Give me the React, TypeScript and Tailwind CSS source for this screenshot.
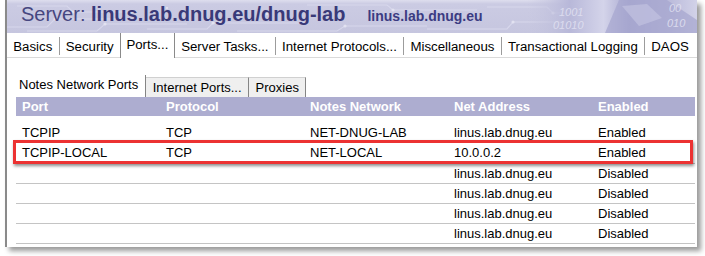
import React from "react";

const tabs = [
  "Basics",
  "Security",
  "Ports...",
  "Server Tasks...",
  "Internet Protocols...",
  "Miscellaneous",
  "Transactional Logging",
  "DAOS",
];
const ACTIVE = 2;

const cols = ["Port", "Protocol", "Notes Network", "Net Address", "Enabled"];
const rows: string[][] = [
  ["TCPIP", "TCP", "NET-DNUG-LAB", "linus.lab.dnug.eu", "Enabled"],
  ["TCPIP-LOCAL", "TCP", "NET-LOCAL", "10.0.0.2", "Enabled"],
  ["", "", "", "linus.lab.dnug.eu", "Disabled"],
  ["", "", "", "linus.lab.dnug.eu", "Disabled"],
  ["", "", "", "linus.lab.dnug.eu", "Disabled"],
  ["", "", "", "linus.lab.dnug.eu", "Disabled"],
];

function HeaderArt() {
  return (
    <svg
      className="absolute inset-0"
      width="690"
      height="33"
      viewBox="0 0 690 33"
      preserveAspectRatio="none"
    >
      <defs>
        <linearGradient id="hg" x1="0" y1="0" x2="0" y2="1">
          <stop offset="0" stopColor="#dedeee" />
          <stop offset="0.12" stopColor="#cbcbe3" />
          <stop offset="1" stopColor="#c6c6df" />
        </linearGradient>
        <linearGradient id="rg" x1="0" y1="0" x2="1" y2="0">
          <stop offset="0" stopColor="#c6c6df" stopOpacity="0" />
          <stop offset="0.25" stopColor="#b8b8d9" />
          <stop offset="0.45" stopColor="#d4d4ea" />
          <stop offset="0.6" stopColor="#a9a9d0" />
          <stop offset="0.85" stopColor="#bdbddc" />
          <stop offset="1" stopColor="#d2d2e8" />
        </linearGradient>
      </defs>
      <rect width="690" height="33" fill="url(#hg)" />
      <g stroke="#d9d9ed" strokeWidth="1.2" fill="none" opacity="0.9">
        <polyline points="0,27 40,27 48,19 110,19" />
        <polyline points="20,31 90,31 98,24 180,24" />
        <polyline points="140,29 200,29 206,23 300,23" />
        <polyline points="230,31 330,31 338,26 420,26" />
        <polyline points="10,6 60,6 66,12 130,12" />
        <polyline points="300,5 380,5 386,10 470,10" />
        <polyline points="420,29 500,29 506,22 560,22" />
        <polyline points="480,7 540,7 546,13 590,13" />
      </g>
      <g fill="#e4e4f2" opacity="0.9">
        <circle cx="48" cy="19" r="1.6" />
        <circle cx="98" cy="24" r="1.6" />
        <circle cx="206" cy="23" r="1.6" />
        <circle cx="338" cy="26" r="1.6" />
        <circle cx="66" cy="12" r="1.6" />
        <circle cx="386" cy="10" r="1.6" />
        <circle cx="506" cy="22" r="1.6" />
        <circle cx="546" cy="13" r="1.6" />
        <circle cx="30" cy="14" r="1.2" />
        <circle cx="160" cy="8" r="1.2" />
        <circle cx="260" cy="14" r="1.2" />
      </g>
      <rect x="520" y="0" width="170" height="33" fill="url(#rg)" />
      <path d="M598 33 L612 0 L660 0 L690 20 L690 33 Z" fill="#a5a5ce" opacity="0.7" />
      <path d="M615 6 L640 4 L655 18 L632 26 Z" fill="#c6c6e2" opacity="0.6" />
      <g
        fill="#e2e2f2"
        fontFamily="'Liberation Sans', Arial, sans-serif"
        fontStyle="italic"
        fontSize="11"
        opacity="0.85"
      >
        <text x="552" y="16">1001</text>
        <text x="546" y="29">01010</text>
        <text x="662" y="12">00</text>
        <text x="660" y="27">010</text>
      </g>
    </svg>
  );
}

export default function App() {
  return (
    <div className="w-[705px] h-[256px] bg-white pl-[5px] font-['Liberation_Sans',Arial,sans-serif] text-black overflow-hidden">
      <div className="relative w-[692px] h-[247px] bg-white border-l-2 border-[#8a8a8a] shadow-[4px_4px_5px_rgba(0,0,0,0.4)] flex flex-col">
        {/* Header */}
        <div className="relative h-[33px] overflow-hidden shrink-0">
          <HeaderArt />
          <div className="relative flex items-baseline pl-[14px] pt-[3px] leading-[23px]">
            <span className="text-[20px] text-[#46467f]">Server:&nbsp;</span>
            <span className="text-[20px] font-bold text-[#393978]">
              linus.lab.dnug.eu/dnug-lab
            </span>
            <span className="ml-[22px] text-[14px] font-bold text-[#3b3b82] leading-[16px]">
              linus.lab.dnug.eu
            </span>
          </div>
        </div>

        {/* Main tabs */}
        <div className="flex h-[25px] shrink-0 text-[13.25px]">
          {tabs.map((t, i) => {
            const els: React.ReactNode[] = [];
            if (i > 0 && i !== ACTIVE && i - 1 !== ACTIVE) {
              els.push(
                <div key={"s" + i} className="h-[25px] border-b border-[#dadada] pt-[4px]">
                  <div className="w-px h-[18px] bg-[#9c9c9c]" />
                </div>
              );
            }
            if (i === ACTIVE) {
              els.push(
                <div
                  key={t}
                  className="h-[25px] border-x border-[#8a8a8a] px-[5.5px] pt-[4px] leading-[16px] whitespace-nowrap"
                >
                  {t}
                </div>
              );
            } else {
              els.push(
                <div
                  key={t}
                  className="h-[25px] border-b border-[#dadada] px-[6.25px] pt-[6px] leading-[16px] whitespace-nowrap"
                >
                  {t}
                </div>
              );
            }
            return els;
          })}
          <div className="flex-1 h-[25px] border-b border-[#dadada]" />
        </div>

        {/* Sub tabs */}
        <div className="flex mt-[17px] ml-[9px] mr-[2px] h-[22px] shrink-0 text-[13px]">
          <div className="h-[22px] pl-[3px] pr-[7px] pt-[2px] leading-[16px] border-r border-[#858585] whitespace-nowrap">
            Notes Network Ports
          </div>
          <div className="mt-[2px] h-[20px] px-[6.5px] pt-[1.5px] leading-[16px] bg-[#efefef] border-t border-r border-t-[#d0d0d0] border-r-[#858585] whitespace-nowrap">
            Internet Ports...
          </div>
          <div className="mt-[2px] h-[20px] px-[6.5px] pt-[1.5px] leading-[16px] bg-[#efefef] border-t border-r border-t-[#d0d0d0] border-r-[#858585] whitespace-nowrap">
            Proxies
          </div>
          <div className="flex-1" />
        </div>

        {/* Table header */}
        <div className="ml-[9px] mr-[2px] h-[19px] shrink-0 bg-[#adadd0] grid grid-cols-[144px_144px_144px_144px_1fr] pl-[6px] text-[13px] font-bold text-white leading-[19px]">
          {cols.map((c) => (
            <div key={c} className="whitespace-nowrap">
              {c}
            </div>
          ))}
        </div>

        {/* Rows */}
        <div className="ml-[9px] mr-[2px] mt-[7px] text-[13px] flex flex-col">
          {rows.map((r, ri) => (
            <div
              key={ri}
              className={
                ri === 0
                  ? "h-[20px] grid grid-cols-[144px_144px_144px_144px_1fr] pl-[6px] leading-[19px]"
                  : ri === 1
                  ? "h-[21px] grid grid-cols-[144px_144px_144px_144px_1fr] pl-[6px] leading-[19px] border-b border-[#c4c4c4]"
                  : "h-[20px] grid grid-cols-[144px_144px_144px_144px_1fr] pl-[6px] leading-[19px] border-b border-[#c4c4c4]"
              }
            >
              {r.map((c, ci) => (
                <div key={ci} className="whitespace-nowrap">
                  {c}
                </div>
              ))}
            </div>
          ))}
        </div>

        {/* Red highlight */}
        <div className="absolute left-[6px] top-[140px] w-[680px] h-[24px] border-[3px] border-[#ec3232] shadow-[1px_2px_3px_rgba(0,0,0,0.45)] pointer-events-none" />
      </div>
    </div>
  );
}
